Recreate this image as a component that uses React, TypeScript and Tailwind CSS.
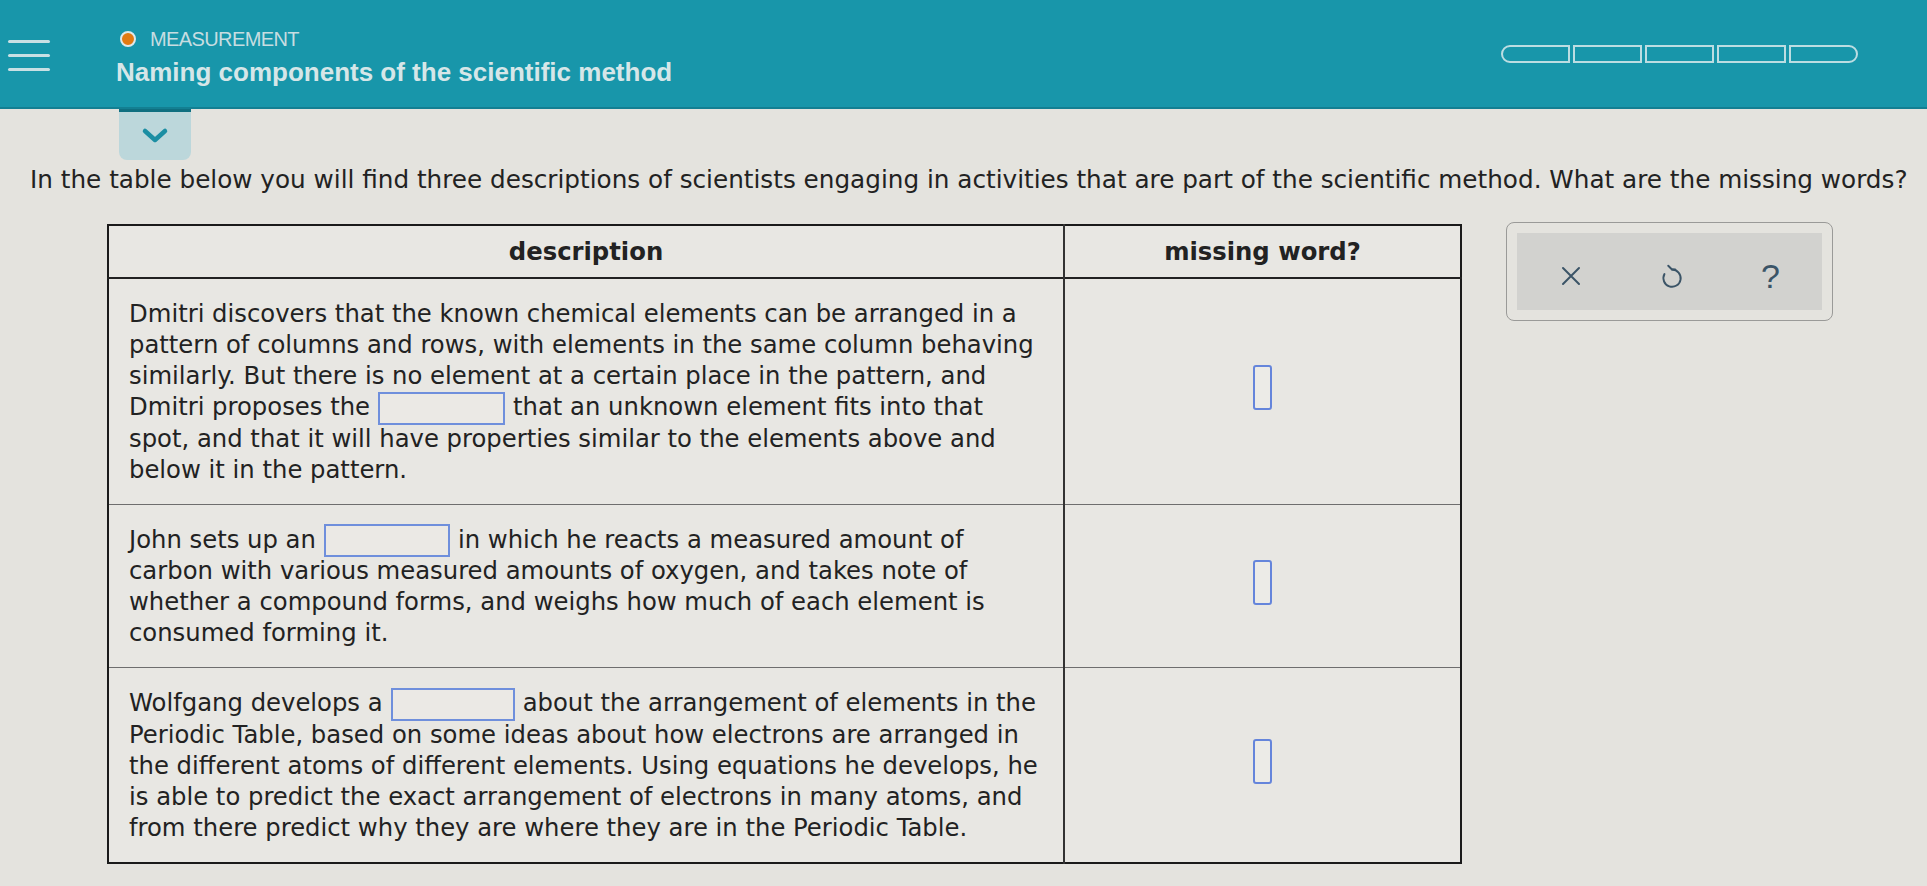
import React from 'react';

/** Inline blank inside a sentence */
function Blank({ w = 127 }: { w?: number }) {
  return (
    <span
      className="mx-[8px] inline-block h-[33px] -my-[2px] align-middle border-2 border-[#6f8fdc] bg-[#ebe9e5]"
      style={{ width: w }}
    />
  );
}

/** Small answer slot in the right column */
function Slot() {
  return <span className="inline-block h-[45px] w-[19px] rounded-[3px] border-2 border-[#6585db] bg-[#ecebe7]" />;
}

const rows: React.ReactNode[][] = [
  [
    'Dmitri discovers that the known chemical elements can be arranged in a',
    'pattern of columns and rows, with elements in the same column behaving',
    'similarly. But there is no element at a certain place in the pattern, and',
    <>Dmitri proposes the<Blank />that an unknown element fits into that</>,
    'spot, and that it will have properties similar to the elements above and',
    'below it in the pattern.',
  ],
  [
    <>John sets up an<Blank w={126} />in which he reacts a measured amount of</>,
    'carbon with various measured amounts of oxygen, and takes note of',
    'whether a compound forms, and weighs how much of each element is',
    'consumed forming it.',
  ],
  [
    <>Wolfgang develops a<Blank w={124} />about the arrangement of elements in the</>,
    'Periodic Table, based on some ideas about how electrons are arranged in',
    'the different atoms of different elements. Using equations he develops, he',
    'is able to predict the exact arrangement of electrons in many atoms, and',
    'from there predict why they are where they are in the Periodic Table.',
  ],
];

export default function App() {
  return (
    <div className="min-h-[886px] w-full bg-[#e4e3de] font-['DejaVu_Sans',sans-serif] text-[#222]">
      {/* Top bar */}
      <div className="flex h-[109px] items-start bg-[#1896aa] shadow-[inset_0_-2px_0_#137f92]">
        <div className="ml-[8px] mt-[40px] flex w-[42px] flex-col gap-[11px]">
          <span className="h-[3px] rounded bg-[#c9e0e4]" />
          <span className="h-[3px] rounded bg-[#c9e0e4]" />
          <span className="h-[3px] rounded bg-[#c9e0e4]" />
        </div>
        <div className="ml-[66px] mt-[28px] font-['Liberation_Sans',Arial,sans-serif]">
          <div className="flex items-center gap-[14px]">
            <span className="ml-[4px] h-[16px] w-[16px] rounded-full border-2 border-[#dfe9ea] bg-[#e27a12]" />
            <span className="text-[20px] leading-[22px] tracking-[-0.6px] text-[#c7dde1]">MEASUREMENT</span>
          </div>
          <div className="mt-[7px] text-[26px] font-bold leading-[30px] text-[#d6e6e8]">
            Naming components of the scientific method
          </div>
        </div>
        <div className="ml-auto mr-[69px] mt-[45px] flex gap-[3px]">
          {[0, 1, 2, 3, 4].map((i) => (
            <span
              key={i}
              className={`h-[18px] w-[69px] border-2 border-[#bcdde2] ${
                i === 0 ? 'rounded-l-full' : i === 4 ? 'rounded-r-full' : ''
              }`}
            />
          ))}
        </div>
      </div>

      {/* Collapse tab */}
      <div className="ml-[119px] flex h-[51px] w-[72px] items-center justify-center rounded-b-[8px] border-t-[3px] border-[#0f6f80] bg-[#bcd7db]">
        <svg width="28" height="18" viewBox="0 0 28 18" fill="none" stroke="#1b8ea3" strokeWidth="4.5" strokeLinecap="round" strokeLinejoin="round">
          <path d="M4 4l10 9 10-9" />
        </svg>
      </div>

      <p className="ml-[30px] mt-[5px] text-[24.7px] leading-[30px] whitespace-nowrap">
        In the table below you will find three descriptions of scientists engaging in activities that are part of the scientific method. What are the missing words?
      </p>

      <div className="mt-[29px] flex items-start">
        <table className="ml-[107px] border-collapse border-2 border-[#1a1a1a] bg-[#e8e7e3] text-[24.3px] leading-[31px]">
          <thead>
            <tr className="h-[53px] border-b-2 border-[#222]">
              <th className="w-[956px] border-r-2 border-[#333] font-bold">description</th>
              <th className="w-[397px] font-bold">missing word?</th>
            </tr>
          </thead>
          <tbody>
            {rows.map((lines, r) => (
              <tr key={r} className="border-t border-[#6e6e6e]">
                <td className="whitespace-nowrap border-r-2 border-[#333] px-[20px] py-[19px] align-top">
                  {lines.map((line, i) => (
                    <div key={i}>{line}</div>
                  ))}
                </td>
                <td className="text-center align-middle">
                  <Slot />
                </td>
              </tr>
            ))}
          </tbody>
        </table>

        {/* Tools panel */}
        <div className="ml-[44px] -mt-[2px] w-[327px] rounded-[8px] border-[1.5px] border-[#9a9a98] p-[10px]">
          <div className="flex h-[77px] items-center justify-center gap-[76px] bg-[#d2d2cf] pt-[8px] text-[#3b5467]">
            <svg width="24" height="24" viewBox="0 0 24 24" fill="none" stroke="currentColor" strokeWidth="2" strokeLinecap="round">
              <path d="M4 4l16 16M20 4L4 20" />
            </svg>
            <svg width="26" height="28" viewBox="0 0 24 26" fill="none" stroke="currentColor" strokeWidth="1.8" strokeLinecap="round" strokeLinejoin="round">
              <path d="M12 7a8 8 0 1 1-7 4.2" />
              <path d="M12 7L8.5 3.5M12 7H15" />
            </svg>
            <span className="font-['Liberation_Sans',Arial,sans-serif] text-[34px] font-light leading-none">?</span>
          </div>
        </div>
      </div>
    </div>
  );
}
